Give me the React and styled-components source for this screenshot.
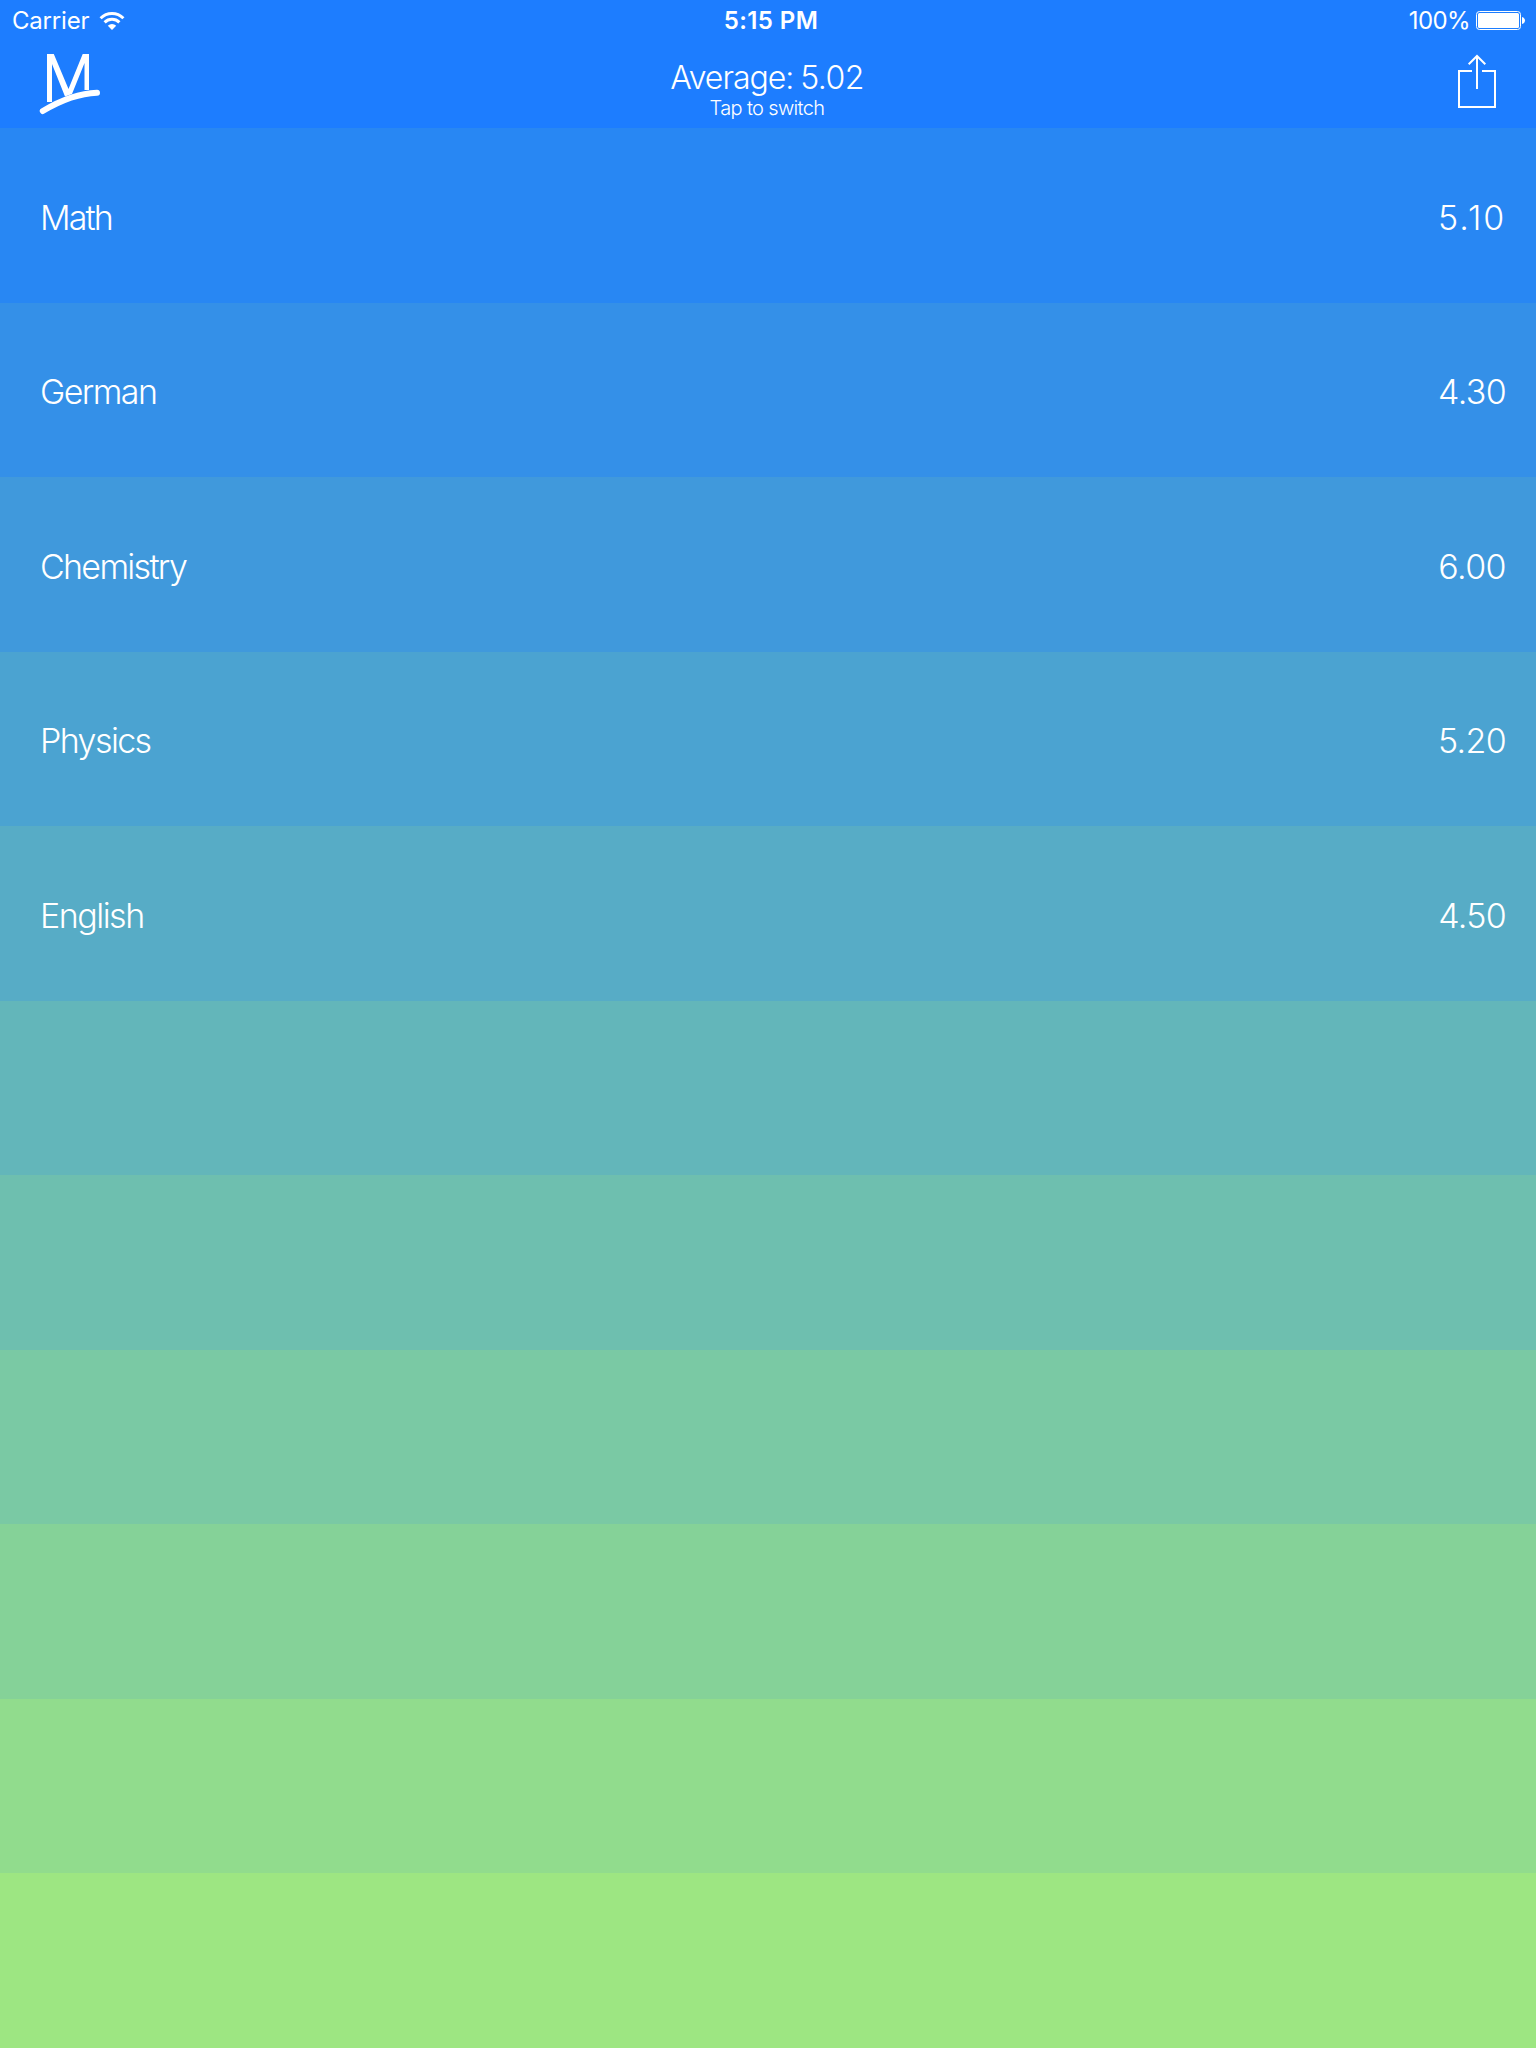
import React from "react";
import styled, { createGlobalStyle } from "styled-components";

const GlobalStyle = createGlobalStyle`
  * { box-sizing: border-box; }
  body { margin: 0; font-family: Inter, "Liberation Sans", sans-serif; }
`;

const Screen = styled.div`
  display: flex;
  flex-direction: column;
  width: 1536px;
  height: 2048px;
  color: #fff;
  background: #1d7dff;
`;

const StatusBar = styled.div`
  display: grid;
  grid-template-columns: 1fr auto 1fr;
  align-items: center;
  height: 40px;
  padding: 2px 10px 0 12px;
  font-size: 24px;
  line-height: 38px;
`;

const StatusGroup = styled.div`
  display: flex;
  align-items: center;
  justify-content: ${(p) => (p.$end ? "flex-end" : "flex-start")};
  gap: ${(p) => p.$gap}px;
`;

const StatusText = styled.span`
  padding-left: ${(p) => p.$indent || 0}px;
  font-weight: ${(p) => p.$weight || 400};
  letter-spacing: ${(p) => p.$spacing || 0}px;
`;

const NavBar = styled.header`
  display: grid;
  grid-template-columns: 1fr auto 1fr;
  height: 88px;
  padding: 8px 38px 0 38px;
`;

const NavButton = styled.button`
  display: flex;
  justify-self: ${(p) => (p.$end ? "end" : "start")};
  align-self: start;
  padding: ${(p) => (p.$end ? 6 : 0)}px 0 0;
  border: 0;
  background: none;
`;

const Title = styled.div`
  display: flex;
  flex-direction: column;
  align-items: center;
  padding: 11px 2px 0 0;
`;

const Heading = styled.div`
  font-size: 32px;
  font-weight: 300;
  line-height: 38px;
  letter-spacing: -1px;
  word-spacing: -1px;

  span {
    letter-spacing: -0.6px;
  }
`;

const Hint = styled.div`
  font-size: 20px;
  font-weight: 300;
  line-height: 22px;
  letter-spacing: -0.65px;
`;

const List = styled.main`
  display: flex;
  flex: 1;
  flex-direction: column;
`;

const Row = styled.div`
  display: flex;
  flex: 1;
  align-items: center;
  justify-content: space-between;
  padding: 4px 30px 0 40px;
  background: ${(p) => p.$color};
  font-size: 34px;
  font-weight: 300;
`;

const Subject = styled.span`
  letter-spacing: ${(p) => p.$spacing}px;
`;

const Grade = styled.span`
  width: 68px;
  text-align: right;
  white-space: nowrap;
  letter-spacing: ${(p) => p.$spacing}px;
`;

const subjects = [
  { name: "Math", grade: "5.10", spacing: -1.9, gradeSpacing: 2 },
  { name: "German", grade: "4.30", spacing: -1.6, gradeSpacing: -0.6 },
  { name: "Chemistry", grade: "6.00", spacing: -1.7, gradeSpacing: -0.6 },
  { name: "Physics", grade: "5.20", spacing: -1.6, gradeSpacing: -0.7 },
  { name: "English", grade: "4.50", spacing: -1.5, gradeSpacing: -0.7 },
];

const colors = [
  "#2887f3", "#3490e8", "#4099dc", "#4ba3d1", "#57acc6", "#63b6ba",
  "#6ebfaf", "#7ac9a4", "#85d298", "#91dc8d", "#9de682",
];

const WifiIcon = () => (
  <svg width="26" height="20" viewBox="0 0 26 20" fill="none" stroke="#fff" strokeWidth="3">
    <path d="M1.600 7.200a16.200 16.200 0 0 1 22.800 0" />
    <path d="M5.600 11.400a10.500 10.500 0 0 1 14.800 0" />
    <path d="M13 19l-4.200-4.200a6 6 0 0 1 8.400 0z" fill="#fff" stroke="none" />
  </svg>
);

const BatteryIcon = () => (
  <svg width="50" height="20" viewBox="0 0 50 20" fill="none">
    <rect x="0.5" y="0.5" width="44" height="18" rx="3" stroke="#fff" />
    <rect x="2" y="2" width="41" height="15" rx="1.5" fill="#fff" />
    <path d="M46 6c4 1 4 6 0 7z" fill="#fff" />
  </svg>
);

const Logo = () => (
  <svg width="64" height="68" viewBox="38 48 64 68" fill="none" stroke="#fff">
    <path d="M47 102V54h6.800l14.700 35 14.200-35H89v36h-4.500V63L72 94l-7 2.500L52 64v38z" fill="#fff" stroke="none" />
    <path d="M42.800 111C58 102 76 93.500 97 92.800" strokeWidth="6" strokeLinecap="round" />
  </svg>
);

const ShareIcon = () => (
  <svg width="40" height="56" viewBox="1458 54 40 56" fill="none" stroke="#fff" strokeWidth="2">
    <path d="M1472 71h-13v36h36V71h-13M1477 89V56M1468.700 64.300l8.300-8.300 8.300 8.300" />
  </svg>
);

export default function App() {
  return (
    <Screen>
      <GlobalStyle />
      <StatusBar>
        <StatusGroup $gap={10}>
          <StatusText $spacing={-0.2}>Carrier</StatusText>
          <WifiIcon />
        </StatusGroup>
        <StatusText $weight={600} $spacing={0.4} $indent={4}>5:15 PM</StatusText>
        <StatusGroup $end $gap={6}>
          <StatusText $spacing={-0.6}>100%</StatusText>
          <BatteryIcon />
        </StatusGroup>
      </StatusBar>
      <NavBar>
        <NavButton aria-label="Home"><Logo /></NavButton>
        <Title>
          <Heading>Average: <span>5.02</span></Heading>
          <Hint>Tap to switch</Hint>
        </Title>
        <NavButton $end aria-label="Share"><ShareIcon /></NavButton>
      </NavBar>
      <List>
        {colors.map((color, i) => (
          <Row key={color} $color={color}>
            {subjects[i] && (
              <>
                <Subject $spacing={subjects[i].spacing}>{subjects[i].name}</Subject>
                <Grade $spacing={subjects[i].gradeSpacing}>{subjects[i].grade}</Grade>
              </>
            )}
          </Row>
        ))}
      </List>
    </Screen>
  );
}
